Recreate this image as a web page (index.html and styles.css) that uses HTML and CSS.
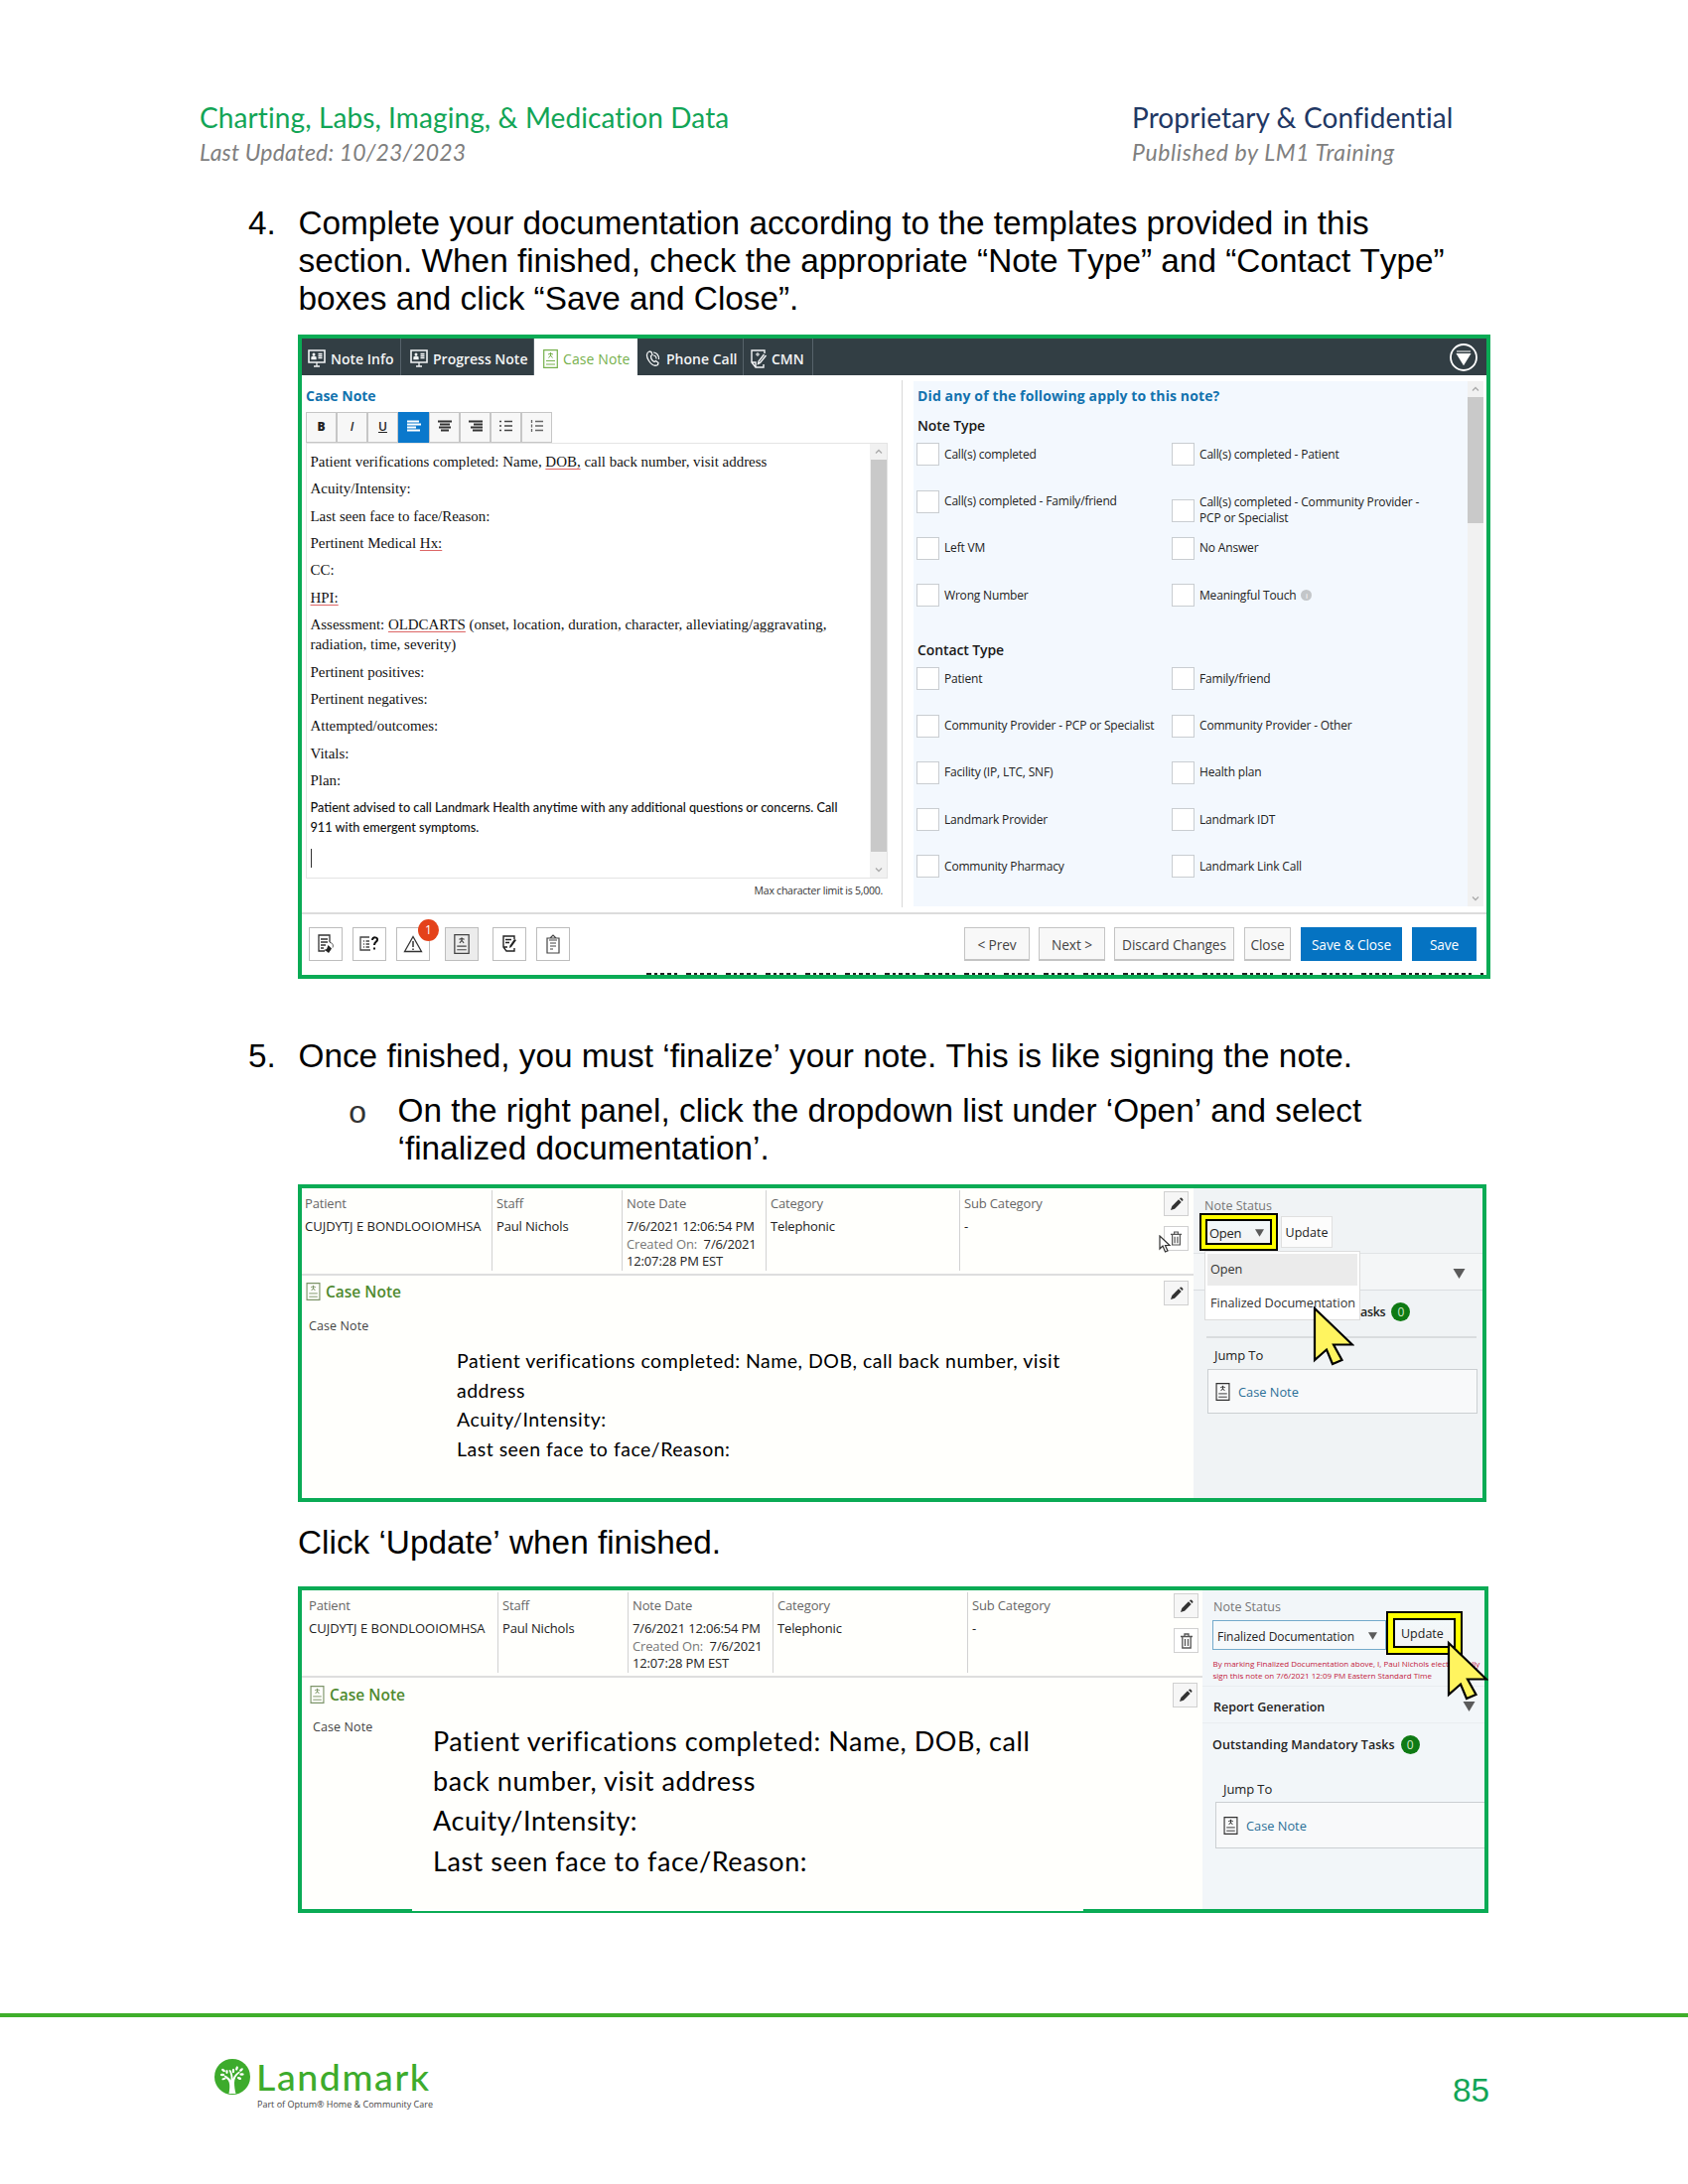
FILE: index.html
```html
<!DOCTYPE html>
<html lang="en">
<head>
<meta charset="utf-8">
<title>Charting, Labs, Imaging, &amp; Medication Data</title>
<link rel="stylesheet" href="styles.css">
</head>
<body>
<svg class="defs" width="0" height="0" aria-hidden="true">
  <symbol id="i-monitor" viewBox="0 0 18 18"><path d="M1 1h16v12H1z" fill="none" stroke="currentColor" stroke-width="1.6"/><path d="M6 17h6M9 13v4M4 9.500h4V8L6 7 4 8zM10.500 4.500h4M10.500 6.500h4M10.500 8.500h4" fill="currentColor" stroke="currentColor" stroke-width="1.300"/><circle cx="6" cy="5" r="1.500" fill="currentColor"/></symbol>
  <symbol id="i-note" viewBox="0 0 15 19"><path d="M.7.7h13.600v17.600H.7z" fill="none" stroke="currentColor" stroke-width="1.200"/><path d="M3 11.500h9M3 15h9M7.500 3v4M5 5l2.500-1L10 5M5.500 8.500l2-2.500 2 2.500" fill="none" stroke="currentColor" stroke-width="1"/></symbol>
  <symbol id="i-phone" viewBox="0 0 15 16"><path d="M4 1C1 2 .5 6 3.500 10.500S10 16 12.500 14.500L13 12.500 10.500 10.500 9 11.500C7 10.500 5.500 8 5.500 5.500L7 4.500 6 1.500z" fill="none" stroke="currentColor" stroke-width="1.300"/><path d="M8 2c3 0 6 3 5.500 7M8 5c2 0 3 1.500 3 3.500" fill="none" stroke="currentColor" stroke-width="1.200"/></symbol>
  <symbol id="i-cmn" viewBox="0 0 17 19"><path d="M14 4V1H1v12l4 5h8v-3M1 13h4v5M15.500 6l-6 7.500-2 1 .5-2.500L13.500 5" fill="none" stroke="currentColor" stroke-width="1.400"/><path d="M5 5h4M7 3v4" stroke="currentColor"/></symbol>
  <symbol id="i-pencil" viewBox="0 0 14 14"><path d="M1 13l1.300-4L9 2.300 11.700 5 5 11.700z" fill="#333"/><path d="M10 1.400L11 .5c.7-.5 3 1.800 2.500 2.500l-.9 1z" fill="#333"/></symbol>
  <symbol id="i-trash" viewBox="0 0 14 16"><path d="M1 3.500h12M5 3V1h4v2M2.800 4v11h8.400V4M5.500 6v7M8.500 6v7" fill="none" stroke="#555" stroke-width="1.300"/></symbol>
  <symbol id="i-tri" viewBox="0 0 12 10"><path d="M0 0h12L6 10z" fill="#5b5b5b"/></symbol>
  <symbol id="i-up" viewBox="0 0 16 16"><path d="M5 9.500L8 6.500l3 3" fill="none" stroke="#aaa" stroke-width="1.300"/></symbol>
  <symbol id="i-down" viewBox="0 0 16 16"><path d="M5 6.500L8 9.500l3-3" fill="none" stroke="#aaa" stroke-width="1.300"/></symbol>
  <symbol id="i-cursor" viewBox="0 0 42 61"><path d="M2 3L40 39.500H21L29.500 55 20 59 14 44.500 2 55z" fill="#fff45f" stroke="#000" stroke-width="2.200"/></symbol>
</svg>
<div class="page">
  <header class="doc-head">
    <div class="head-left"><div class="head-title green">Charting, Labs, Imaging, &amp; Medication Data</div><div class="head-sub">Last Updated: 10/23/2023</div></div>
    <div class="head-right"><div class="head-title navy">Proprietary &amp; Confidential</div><div class="head-sub pub">Published by LM1 Training</div></div>
  </header>

  <div class="step step4"><span class="num">4.</span><p>Complete your documentation according to the templates provided in this<br>section. When finished, check the appropriate “Note Type” and “Contact Type”<br>boxes and click “Save and Close”.</p></div>

  <section class="shot shot1">
    <nav class="tabs">
      <div class="tab t-info"><svg width="18" height="18"><use href="#i-monitor"/></svg>Note Info</div>
      <div class="tab t-prog"><svg width="18" height="18"><use href="#i-monitor"/></svg>Progress Note</div>
      <div class="tab t-case"><svg width="15" height="19"><use href="#i-note"/></svg>Case Note</div>
      <div class="tab t-phone"><svg width="15" height="16"><use href="#i-phone"/></svg>Phone Call</div>
      <div class="tab t-cmn"><svg width="17" height="19"><use href="#i-cmn"/></svg>CMN</div>
      <svg class="collapse" width="30" height="30" viewBox="0 0 30 30"><circle cx="15" cy="15" r="13" fill="none" stroke="#fff" stroke-width="1.800"/><path d="M8 9h14M8.500 11.500h13L15 22z" fill="#fff" stroke="#fff" stroke-width="1.200"/></svg>
    </nav>
    <div class="work">
      <div class="pane-left">
        <h2>Case Note</h2>
        <div class="toolbar">
          <span class="tb"><b>B</b></span><span class="tb"><i>I</i></span><span class="tb"><u>U</u></span>
          <span class="tb on"><svg width="14" height="12"><path d="M0 1.500h12M0 4.500h14M0 7.500h9M0 10.500h13" stroke="#fff" stroke-width="2"/></svg></span>
          <span class="tb"><svg width="14" height="12"><path d="M0 1.500h14M2 4.500h10M1 7.500h12M3 10.500h8" stroke="#333" stroke-width="2"/></svg></span>
          <span class="tb"><svg width="14" height="12"><path d="M0 1.500h14M5 4.500h9M2 7.500h12M4 10.500h10" stroke="#333" stroke-width="2"/></svg></span>
          <span class="tb"><svg width="14" height="12"><path d="M0 1.500h2M5 1.500h8M0 6h2M5 6h8M0 10.500h2M5 10.500h8" stroke="#444" stroke-width="1.400"/></svg></span>
          <span class="tb"><svg width="14" height="12"><path d="M1.500 0v3M1.500 4.500v3M1.500 9v3M5 1.500h8M5 6h8M5 10.500h8" stroke="#666" stroke-width="1.300"/></svg></span>
        </div>
        <div class="editor">
          <div class="doc">
            <p>Patient verifications completed: Name, <span class="sp">DOB,</span> call back number, visit address</p>
            <p>Acuity/Intensity:</p>
            <p>Last seen face to face/Reason:</p>
            <p>Pertinent Medical <span class="sp">Hx:</span></p>
            <p>CC:</p>
            <p><span class="sp">HPI:</span></p>
            <p class="assess">Assessment: <span class="sp">OLDCARTS</span> (onset, location, duration, character, alleviating/aggravating,<br>radiation, time, severity)</p>
            <p>Pertinent positives:</p>
            <p>Pertinent negatives:</p>
            <p>Attempted/outcomes:</p>
            <p>Vitals:</p>
            <p>Plan:</p>
            <p class="advice">Patient advised to call Landmark Health anytime with any additional questions or concerns. Call<br>911 with emergent symptoms.</p>
            <span class="caret"></span>
          </div>
          <div class="scroll sc-editor"><svg width="16" height="16"><use href="#i-up"/></svg><span class="thumb"></span><svg class="dn" width="16" height="16"><use href="#i-down"/></svg></div>
        </div>
        <div class="limit">Max character limit is 5,000.</div>
      </div>
      <div class="pane-right">
        <div class="apply">
          <h2 class="q">Did any of the following apply to this note?</h2>
          <h3>Note Type</h3>
          <div class="checks">
            <label><i></i>Call(s) completed</label><label><i></i>Call(s) completed - Patient</label>
            <label><i></i>Call(s) completed - Family/friend</label><label class="tall"><i></i><span>Call(s) completed - Community Provider -<br>PCP or Specialist</span></label>
            <label><i></i>Left VM</label><label><i></i>No Answer</label>
            <label><i></i>Wrong Number</label><label><i></i>Meaningful Touch <em class="info">i</em></label>
          </div>
          <h3>Contact Type</h3>
          <div class="checks">
            <label><i></i>Patient</label><label><i></i>Family/friend</label>
            <label><i></i>Community Provider - PCP or Specialist</label><label><i></i>Community Provider - Other</label>
            <label><i></i>Facility (IP, LTC, SNF)</label><label><i></i>Health plan</label>
            <label><i></i>Landmark Provider</label><label><i></i>Landmark IDT</label>
            <label><i></i>Community Pharmacy</label><label><i></i>Landmark Link Call</label>
          </div>
        </div>
        <div class="scroll sc-apply"><svg width="16" height="16"><use href="#i-up"/></svg><span class="thumb"></span><svg class="dn" width="16" height="16"><use href="#i-down"/></svg></div>
      </div>
    </div>
    <div class="actions">
      <span class="ib"><svg width="18" height="20" viewBox="0 0 18 20"><path d="M13 8V1H2v16h6M4 5h7M4 8h7M4 11h5M4 14h3" fill="none" stroke="#333" stroke-width="1.300"/><path d="M13 8.500c3 0 4 3 3 5" fill="none" stroke="#555"/><path d="M11.500 11l3.500 3.500-3 4.500-2.500-2-2.500-1 3-1z" fill="#222"/></svg></span>
      <span class="ib b2"><svg width="20" height="18" viewBox="0 0 20 18"><path d="M10 2H1v13h10M4 6h1M6.500 6H10M4 9h1M6.500 9H10M4 12h1M6.500 12H10" fill="none" stroke="#444" stroke-width="1.300"/><path d="M13 5c0-4 6-3 5 0-.5 2-3 2-3 5M15 12.500v2" fill="none" stroke="#111" stroke-width="2"/></svg></span>
      <span class="ib b3"><svg width="20" height="18" viewBox="0 0 20 18"><path d="M10 1.500L18.500 16.500H1.500z" fill="none" stroke="#333" stroke-width="1.300"/><path d="M10 6v6M10 13.500v1.500" stroke="#333" stroke-width="1.500"/></svg><em class="alert">1</em></span>
      <span class="ib b4"><svg width="16" height="20"><use href="#i-note"/></svg></span>
      <span class="ib b5"><svg width="16" height="18" viewBox="0 0 16 18"><path d="M13 4V1H2v11l3 4h8v-3M2 12h4M4 4.500h6M4 7.500h4" fill="none" stroke="#222" stroke-width="1.400"/><path d="M15 5l-5 7-2 1 .5-2.500L13 4z" fill="#222"/></svg></span>
      <span class="ib b6"><svg width="14" height="20" viewBox="0 0 14 20"><path d="M1 4h12v15H1zM4 4l3-3 3 3M3 6h8M4 9h6M4 12h6M4 15h3" fill="none" stroke="#444" stroke-width="1.200"/></svg></span>
      <span class="btn prev">&lt; Prev</span><span class="btn next">Next &gt;</span><span class="btn disc">Discard Changes</span><span class="btn close">Close</span><span class="btn blue sc">Save &amp; Close</span><span class="btn blue sv">Save</span>
    </div>
    <div class="cut"></div>
  </section>

  <div class="step step5"><span class="num">5.</span><div><p>Once finished, you must ‘finalize’ your note. This is like signing the note.</p>
    <div class="sub"><span class="bullet">o</span><p>On the right panel, click the dropdown list under ‘Open’ and select<br>‘finalized documentation’.</p></div></div></div>

  <section class="shot shot2">
    <div class="record">
      <div class="cols">
        <div class="col"><span class="lb">Patient</span><span class="nm">CUJDYTJ E BONDLOOIOMHSA</span></div>
        <div class="col"><span class="lb">Staff</span><span>Paul Nichols</span></div>
        <div class="col"><span class="lb">Note Date</span><span>7/6/2021 12:06:54 PM</span><span class="cr"><span class="lbi">Created On:</span>&nbsp; 7/6/2021</span><span>12:07:28 PM EST</span></div>
        <div class="col"><span class="lb">Category</span><span>Telephonic</span></div>
        <div class="col"><span class="lb">Sub Category</span><span>-</span></div>
        <div class="tools"><span class="tool"><svg width="14" height="14"><use href="#i-pencil"/></svg></span><span class="tool tr"><svg width="13" height="15"><use href="#i-trash"/></svg></span></div>
        <svg class="mouse" width="13" height="18" viewBox="0 0 13 18"><path d="M1 1v13l3-3 2.500 6 2.500-1-2.500-5.500H11z" fill="#fff" stroke="#333" stroke-width="1.200"/></svg>
      </div>
      <div class="bar"><svg width="15" height="18"><use href="#i-note"/></svg><b>Case Note</b><span class="tool"><svg width="14" height="14"><use href="#i-pencil"/></svg></span></div>
      <div class="body"><span class="small">Case Note</span><div class="note">Patient verifications completed: Name, DOB, call back number, visit<br>address<br>Acuity/Intensity:<br>Last seen face to face/Reason:</div></div>
    </div>
    <aside class="side">
      <div class="status">Note Status</div>
      <div class="ctl"><span class="hl">Open<svg width="9" height="8"><use href="#i-tri"/></svg></span><span class="upd">Update</span></div>
      <div class="rep"><svg width="13" height="10"><use href="#i-tri"/></svg></div>
      <div class="tasks"><b>asks</b><em>0</em></div>
      <div class="jump">Jump To</div>
      <div class="link"><svg width="15" height="18"><use href="#i-note"/></svg>Case Note</div>
      <div class="menu"><span class="sel">Open</span><span>Finalized Documentation</span></div>
      <svg class="cursor" width="42" height="61"><use href="#i-cursor"/></svg>
    </aside>
  </section>

  <div class="step click"><p>Click ‘Update’ when finished.</p></div>

  <section class="shot shot3">
    <div class="record">
      <div class="cols">
        <div class="col"><span class="lb">Patient</span><span class="nm">CUJDYTJ E BONDLOOIOMHSA</span></div>
        <div class="col"><span class="lb">Staff</span><span>Paul Nichols</span></div>
        <div class="col"><span class="lb">Note Date</span><span>7/6/2021 12:06:54 PM</span><span class="cr"><span class="lbi">Created On:</span>&nbsp; 7/6/2021</span><span>12:07:28 PM EST</span></div>
        <div class="col"><span class="lb">Category</span><span>Telephonic</span></div>
        <div class="col"><span class="lb">Sub Category</span><span>-</span></div>
        <div class="tools"><span class="tool"><svg width="14" height="14"><use href="#i-pencil"/></svg></span><span class="tool tr"><svg width="14" height="16"><use href="#i-trash"/></svg></span></div>
      </div>
      <div class="bar"><svg width="15" height="18"><use href="#i-note"/></svg><b>Case Note</b><span class="tool"><svg width="14" height="14"><use href="#i-pencil"/></svg></span></div>
      <div class="body"><span class="small">Case Note</span><div class="note">Patient verifications completed: Name, DOB, call<br>back number, visit address<br>Acuity/Intensity:<br>Last seen face to face/Reason:</div></div>
    </div>
    <aside class="side">
      <div class="status">Note Status</div>
      <div class="ctl"><span class="select">Finalized Documentation<svg width="9" height="8"><use href="#i-tri"/></svg></span><span class="hl">Update</span></div>
      <div class="legal">By marking Finalized Documentation above, I, Paul Nichols electronically<br><span>sign this note on 7/6/2021 12:09 PM Eastern Standard Time</span></div>
      <div class="rep"><b>Report Generation</b><svg width="13" height="10"><use href="#i-tri"/></svg></div>
      <div class="tasks"><b>Outstanding Mandatory Tasks</b><em>0</em></div>
      <div class="jump">Jump To</div>
      <div class="link"><svg width="15" height="18"><use href="#i-note"/></svg>Case Note</div>
      <svg class="cursor" width="42" height="61"><use href="#i-cursor"/></svg>
    </aside>
  </section>

  <footer class="doc-foot">
    <svg class="tree" width="36" height="36" viewBox="0 0 36 36"><circle cx="18" cy="18" r="18" fill="#3dab2c"/><path d="M14.500 35c1-6 1-9 0-12-1-2.500-3.500-4-5-5.500l1-1c2 1 4.500 2.500 6 5C17 18 16 14 14.500 11.500l1.500-.5c2 3 2.500 6 2.500 9 1-3 3.500-6 6.500-7.500l.7 1.200c-4 3-5.700 6.300-5.700 10.300 0 4 .5 7 1.500 11z" fill="#fff"/><g fill="#fff"><ellipse cx="9" cy="11.500" rx="2.200" ry="1.200" transform="rotate(35 9 11.500)"/><ellipse cx="8" cy="16" rx="2.200" ry="1.200"/><ellipse cx="12.500" cy="13" rx="1.200" ry="2"/><ellipse cx="19" cy="12" rx="1.200" ry="2.200"/><ellipse cx="22.500" cy="9.500" rx="1.200" ry="2.200" transform="rotate(20 22.500 9.500)"/><ellipse cx="27" cy="11" rx="1.200" ry="2.200" transform="rotate(50 27 11)"/><ellipse cx="27.500" cy="15.500" rx="2.200" ry="1.200"/><ellipse cx="25" cy="19.500" rx="2.200" ry="1.200" transform="rotate(20 25 19.500)"/><ellipse cx="9.500" cy="20" rx="2.200" ry="1" transform="rotate(-20 9.500 20)"/></g></svg>
    <div class="brand"><div class="bname">Landmark</div><div class="bsub">Part of Optum® Home &amp; Community Care</div></div>
    <div class="pageno">85</div>
  </footer>
</div>
</body>
</html>
```
FILE: styles.css
```css
* { box-sizing: border-box; }
body { margin: 0; background: #fff; color: #000; }
p, h2, h3 { margin: 0; }
svg { display: block; flex: none; }
em, .tb i, .checks i { font-style: normal; }
.defs { position: absolute; }
.page { width: 1700px; height: 2200px; overflow: hidden; display: flex; flex-direction: column; font-family: "Open Sans", "Noto Sans", sans-serif; white-space: nowrap; }

/* document header */
.doc-head { height: 206px; flex: none; padding: 100px 0 0 201px; display: flex; font-family: Lato, sans-serif; font-variant-ligatures: none; }
.head-left { width: 939px; }
.head-title { font-size: 28px; line-height: 36.500px; letter-spacing: .1px; }
.head-sub { font-size: 23px; line-height: 32px; font-style: italic; color: #7f7f7f; letter-spacing: .15px; }
.pub { letter-spacing: .6px; }
.green { color: #12a556; }
.navy { color: #1f3864; }

/* instructions */
.step { flex: none; display: flex; padding-left: 250px; font: 33.330px/38.100px "Liberation Sans", Arial, sans-serif; font-kerning: none; }
.num { width: 50.500px; flex: none; }
.step4 { height: 131px; }
.step5 { height: 207px; padding-top: 59px; }
.sub { display: flex; margin-top: 17px; padding-left: 50px; }
.bullet { width: 50px; font: 32px/45px "Liberation Mono", monospace; color: #333; }
.click { height: 85px; padding: 22px 0 0 300px; }

.shot { flex: none; margin-left: 300px; border: 4px solid #0aab55; position: relative; background: #fff; }

/* note editor */
.shot1 { width: 1201px; height: 649px; display: flex; flex-direction: column; }
.tabs { height: 37px; flex: none; background: #323e44; display: flex; position: relative; }
.tab { display: flex; align-items: center; gap: 5px; color: #f2f4f5; font-size: 14px; font-weight: 600; padding-top: 3px; border-right: 1px solid #56626a; }
.t-info { width: 100px; padding-left: 6px; }
.t-prog { width: 134px; padding-left: 9px; }
.t-case { width: 104px; padding-left: 9px; background: #fff; color: #76b04c; font-weight: 400; border: 0; letter-spacing: .1px; }
.t-phone { width: 107px; padding-left: 8px; gap: 6px; }
.t-cmn { width: 70px; padding-left: 7px; gap: 4px; }
.collapse { margin: 4px 8px 0 auto; }
.work { height: 543px; flex: none; display: flex; border-bottom: 2px solid #dcdcdc; }
.pane-left { width: 604px; padding: 10.500px 0 0 4px; }
h2 { font-size: 14px; line-height: 20px; font-weight: 700; color: #1272ae; }
h2.q { letter-spacing: .12px; }
.toolbar { display: flex; margin-top: 6px; height: 31px; }
.tb { width: 31px; height: 31px; border: 1px solid #c6c6c6; background: #f7f7f7; display: flex; align-items: center; justify-content: center; font-size: 12px; color: #222; padding-bottom: 2px; }
.tb i { font-style: italic; font-weight: 600; }
.tb u { font-weight: 600; }
.tb b { font-weight: 800; }
.tb.on { background: #0a78cc; border-color: #0a78cc; }
.editor { width: 586px; height: 439px; border: 1.500px solid #e4e4e4; display: flex; justify-content: space-between; }
.doc { padding: 8.600px 0 0 3.500px; font: 14.950px/20px "Liberation Serif", "Times New Roman", serif; color: #111; }
.doc p { margin-bottom: 7.350px; }
.doc .advice { font-family: Lato, sans-serif; font-size: 12.700px; font-weight: 500; margin-bottom: 12px; }
.sp { text-decoration: underline; text-decoration-color: #d66; text-decoration-thickness: 1px; text-underline-offset: 2px; }
.caret { display: block; width: 1px; height: 19px; background: #333; }
.scroll { background: #f1f1f1; display: flex; flex-direction: column; align-items: center; }
.sc-editor { width: 17px; }
.dn { margin-top: auto; }
.thumb { width: 16px; background: #c9c9c9; }
.sc-editor .thumb { height: 395px; }
.sc-apply { width: 16px; }
.sc-apply .thumb { height: 127px; }
.limit { width: 581px; text-align: right; font-size: 10.500px; line-height: 16px; margin-top: 4px; letter-spacing: -.25px; color: #333; }
.pane-right { margin-top: 5px; height: 531px; border-left: 1.500px solid #d8d8d8; padding: 1px 0 1px 11px; display: flex; }
.apply { width: 558px; background: #f3f8fe; padding: 4.600px 0 0 4px; }
h3 { font-size: 14px; line-height: 20px; font-weight: 600; color: #1a1a1a; margin-top: 10px; letter-spacing: -.1px; }
.checks { display: grid; grid-template-columns: 257px 290px; grid-auto-rows: 47.200px; margin: 8.400px 0 -1.200px -1px; }
.checks label { display: flex; height: 22px; align-items: center; font-size: 12px; line-height: 16px; letter-spacing: -.18px; color: #222; }
.checks i { width: 23px; height: 23px; flex: none; margin-right: 5px; background: #fff; border: 1.500px solid #c9cdd1; }
.checks .tall { height: 32px; margin-top: 4px; }
.info { width: 11px; height: 11px; border-radius: 50%; background: #c3c6c9; color: #fff; font-size: 8px; line-height: 11px; text-align: center; margin-left: 5px; }
.actions { display: flex; padding: 13px 0 0 7px; height: 47px; }
.ib { width: 34px; height: 34px; border: 1px solid #bdbdbd; background: #fff; display: flex; align-items: center; justify-content: center; margin-right: 10px; position: relative; color: #444; }
.b3 { margin-right: 15px; }
.b4 { background: #ececec; margin-right: 14px; }
.b6 { margin-right: 0; }
.alert { position: absolute; left: 21px; top: -9px; width: 21px; height: 22px; border-radius: 50%; background: #e4421a; color: #fff; font-size: 12px; line-height: 22px; text-align: center; }
.btn { height: 34px; border: 1px solid #c4c4c4; border-bottom-width: 2px; background: #f8f8f8; color: #444; font-size: 13.700px; line-height: 34px; text-align: center; letter-spacing: -.1px; }
.prev { width: 66px; margin-left: auto; }
.next { width: 67px; margin-left: 9px; }
.disc { width: 121px; margin-left: 9px; }
.close { width: 47px; margin-left: 10px; }
.blue { background: #0573c2; border: 0; color: #fff; line-height: 36px; }
.sc { width: 102px; margin-left: 10px; }
.sv { width: 65px; margin: 0 10px 0 10px; }
.cut { margin: auto 3px 0 347px; height: 2px; background: repeating-linear-gradient(90deg, #222 0 5px, #fff 5px 8px, #222 8px 11px, #fff 11px 14px, #222 14px 18px, #fff 18px 21px, #222 21px 25px, #fff 25px 28px, #222 28px 31px, #fff 31px 40px); }

/* note record */
.shot2 { width: 1197px; height: 320px; display: flex; }
.shot3 { width: 1199px; height: 329px; display: flex; }
.record { background: #fffffc; width: 898px; flex: none; }
.shot3 .record { width: 907px; }
.cols { display: grid; grid-template-columns: 191px 131px 145px 195px 204px 32px; height: 88px; border-bottom: 2px solid #dedede; padding: 2px 0 4px; position: relative; }
.shot3 .cols { grid-template-columns: 197px 131px 146px 196px 206px 31px; }
.col { border-left: 1px solid #d2d2d2; padding: 5px 0 0 4px; display: flex; flex-direction: column; font-size: 13px; line-height: 17.800px; color: #222; letter-spacing: -.15px; }
.col:first-child { border: 0; padding-left: 3px; }
.shot3 .col:first-child { padding-left: 7px; }
.nm { letter-spacing: 0; }
.lb { color: #666; margin-bottom: 5px; }
.lbi { color: #777; }
.tool { width: 25px; height: 25px; border: 1px solid #d0d0d0; background: #f6f6f6; display: flex; align-items: center; justify-content: center; }
.tools { padding: 1px 0 0 2px; }
.tr { margin-top: 10px; background: #fff; }
.mouse { position: absolute; left: 863px; top: 47px; }
.bar { display: flex; align-items: center; height: 30px; padding: 2px 5px 0 4px; color: #7c9468; }
.bar b { font-size: 15.500px; font-weight: 600; color: #4f8a30; margin-left: 5px; }
.bar .tool { margin: 3px 0 0 auto; }
.body { display: flex; padding: 11px 0 0 7px; }
.small { width: 149px; flex: none; font-size: 12.500px; line-height: 20px; color: #444; letter-spacing: .1px; }
.note { font: 19.500px/29.500px Lato, sans-serif; letter-spacing: .5px; padding-top: 30px; font-variant-ligatures: none; }
.shot3 .bar { padding: 3px 5px 0 8px; }
.shot3 .bar .tool { margin: 2px 0 0 auto; }
.shot3 .body { padding: 10px 0 0 11px; }
.shot3 .small { width: 121px; }
.shot3 .note { font-size: 27px; line-height: 40.200px; letter-spacing: .55px; padding-top: 4px; }
.shot3 .record::after { content: ""; position: absolute; left: 111px; bottom: -2px; width: 676px; height: 2px; background: #fff; }

.side { flex: 1; background: #f0f3f5; position: relative; font-size: 13px; color: #222; display: flex; flex-direction: column; }
.status { height: 27px; padding: 9px 0 0 11px; line-height: 18px; color: #777; font-size: 12.500px; }
.ctl { display: flex; }
.hl { border: 2px solid #000; background: linear-gradient(#f2fafd, #f3f1f0); display: flex; align-items: center; position: relative; box-shadow: inset 0 0 0 4px #ff0, inset 0 0 0 6px #000; }
.shot2 .ctl { margin: -2px 0 0 6px; height: 40px; }
.shot2 .hl { width: 79px; height: 38px; padding: 2px 12px 0 8px; justify-content: space-between; letter-spacing: -.3px; }
.upd { margin: 3px 0 0 3px; width: 52px; height: 32px; background: #fcfcfc; border: 1px solid #e0e0e0; line-height: 32px; font-size: 12.500px; text-align: center; }
.rep { display: flex; align-items: center; justify-content: space-between; height: 38px; border-top: 1px solid #e0e3e5; border-bottom: 1px solid #dadde0; background: #f4f6f7; padding: 4px 17px 0 10px; }
.shot2 .rep { justify-content: flex-end; }
.side b { font-weight: 600; font-size: 12.500px; }
.tasks { display: flex; align-items: center; height: 48px; border-bottom: 2px solid #d9dcde; margin: 0 6px 0 13px; padding-bottom: 4px; }
.tasks b { letter-spacing: .08px; }
.shot2 .tasks b { margin-left: 155px; letter-spacing: -.3px; }
.tasks em { width: 19px; height: 19px; border-radius: 50%; background: #0f7a14; color: #cfe8c8; font-size: 12px; line-height: 19px; text-align: center; margin-left: 6px; }
.jump { padding: 8px 0 0 21px; line-height: 18px; height: 31px; letter-spacing: -.1px; }
.link { margin: 0 5px 0 14px; height: 45px; border: 1.500px solid #cbcfd2; background: #f8f9fa; display: flex; align-items: center; gap: 8px; padding: 0 0 0 7px; color: #2b6f97; font-size: 12.800px; }
.link svg { color: #333; }
.menu { position: absolute; left: 11px; top: 63px; width: 157px; height: 70px; background: #fff; border: 1px solid #dcdcdc; padding: 2px; display: flex; flex-direction: column; font-size: 12.700px; color: #333; }
.menu span { height: 32px; line-height: 34px; padding-left: 3px; letter-spacing: -.05px; }
.menu .sel { background: #ebebeb; line-height: 31px; }
.shot2 .cursor { position: absolute; left: 120px; top: 118px; }

.shot3 .side { background: #f2f6f9; }
.shot3 .status { height: 30px; padding-left: 11px; padding-top: 8px; }
.shot3 .ctl { height: 38px; padding-left: 10px; }
.select { width: 175px; height: 30px; border: 1px solid #74aacb; background: #f6f9fb; display: flex; align-items: center; justify-content: space-between; padding: 2px 8px 0 4px; font-size: 12px; letter-spacing: -.05px; }
.shot3 .hl { width: 77px; height: 44px; margin-top: -9px; padding-left: 13px; font-size: 12.500px; box-shadow: inset 0 0 0 5px #ff0, inset 0 0 0 7px #000; }
.legal { font-size: 8px; line-height: 11.700px; color: #c2203c; padding-left: 10.500px; height: 28px; }
.shot3 .rep { height: 38px; background: none; border-color: #e9edf0; padding: 4px 9px 0 11px; }
.shot3 .tasks { height: 43px; border: 0; padding: 0; margin-left: 10px; }
.shot3 .jump { height: 36px; padding-top: 14px; }
.shot3 .link { height: 47px; margin: 0 0 0 13px; border-right: 0; }
.shot3 .cursor { position: absolute; left: 246px; top: 50px; }

/* footer */
.doc-foot { margin-top: 101px; border-top: 4px solid #3fae2a; display: flex; padding: 42px 0 0 216px; }
.brand { margin-left: 6px; width: 1205px; }
.bname { font: 500 37.500px/40px Lato, sans-serif; letter-spacing: 1.600px; color: #3dab2c; margin-top: -2px; }
.bsub { font-size: 9px; line-height: 12px; color: #444; margin: 2px 0 0 1px; }
.pageno { font: 33.330px/40px "Liberation Sans", sans-serif; color: #12a556; margin-top: 12px; }
```
